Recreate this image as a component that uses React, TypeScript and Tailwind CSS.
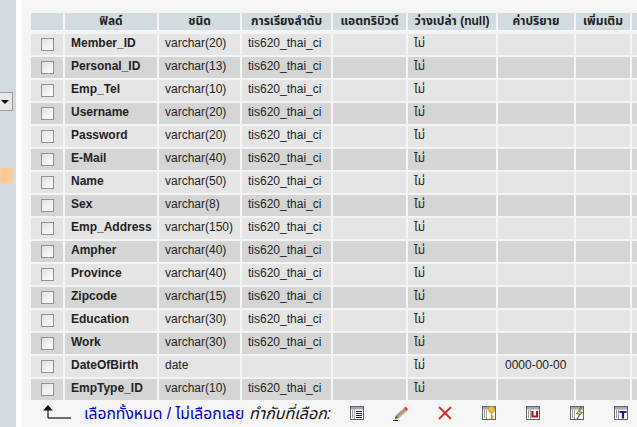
const rows: [string, string, boolean, string?][] = [
  ["Member_ID", "varchar(20)", true],
  ["Personal_ID", "varchar(13)", true],
  ["Emp_Tel", "varchar(10)", true],
  ["Username", "varchar(20)", true],
  ["Password", "varchar(20)", true],
  ["E-Mail", "varchar(40)", true],
  ["Name", "varchar(50)", true],
  ["Sex", "varchar(8)", true],
  ["Emp_Address", "varchar(150)", true],
  ["Ampher", "varchar(40)", true],
  ["Province", "varchar(40)", true],
  ["Zipcode", "varchar(15)", true],
  ["Education", "varchar(30)", true],
  ["Work", "varchar(30)", true],
  ["DateOfBirth", "date", false, "0000-00-00"],
  ["EmpType_ID", "varchar(10)", true],
];

const headers: [string, string][] = [
  ["", "w-[34px]"],
  ["ฟิลด์", "w-[94px]"],
  ["ชนิด", "w-[83px]"],
  ["การเรียงลำดับ", "w-[91px]"],
  ["แอตทริบิวต์", "w-[75px]"],
  ["ว่างเปล่า (null)", "w-[90px]"],
  ["ค่าปริยาย", "w-[78px]"],
  ["เพิ่มเติม", "w-[56px]"],
  ["", "w-[60px]"],
];

function Frame({ children }: { children: React.ReactNode }) {
  return (
    <svg width="14" height="14" viewBox="0 0 14 14" className="shrink-0">
      <rect x="0.5" y="0.5" width="13" height="13" fill="#fff" stroke="#5f6368" />
      <rect x="1" y="1" width="12" height="2.500" fill="#a3a9b0" />
      <path d="M2.500 4.500v8" stroke="#333" strokeDasharray="1 1" />
      <path d="M4.500 3.500v9.500" stroke="#9aa0a6" />
      {children}
    </svg>
  );
}

const Icons = () => (
  <div className="flex items-center gap-[30px]">
    <Frame>
      <path d="M6 5.500h6M6 7.500h6M6 9.500h6M6 11.500h6" stroke="#222" />
    </Frame>
    <svg width="16" height="15" viewBox="0 0 16 15" className="shrink-0 mx-[-1px]">
      <path d="M2 13l1-4 8-7 3 3-8 7z" fill="#d8a850" />
      <path d="M3 9.500l8.500-7 1.500 1.500-8 7z" fill="#8f98b8" />
      <path d="M11 2l1.500-1.500 2.500 2.500-1.500 2z" fill="#d8402c" />
      <path d="M2 13l1-3 2 2z" fill="#333" />
      <path d="M0 14.500h5" stroke="#111" />
    </svg>
    <svg width="14" height="14" viewBox="0 0 14 14" className="shrink-0">
      <path d="M1 1l12 12M13 1L1 13" stroke="#cf2f25" strokeWidth="1.800" />
    </svg>
    <Frame>
      <circle cx="9.500" cy="3.500" r="3.200" fill="#efc22a" stroke="#a5801a" strokeWidth="0.5" />
      <path d="M9.500 6v7M9.500 10.500h2M9.500 12.500h2" stroke="#c89f1c" strokeWidth="1.500" fill="none" />
    </Frame>
    <Frame>
      <path d="M6.500 5v5.500h4.500V5" stroke="#b01818" strokeWidth="2.200" fill="none" />
    </Frame>
    <Frame>
      <path d="M10.500 1.500L6.500 8h3L7 13l5.500-7h-3l2-4.500z" fill="#efd84a" stroke="#333" strokeWidth="0.6" />
    </Frame>
    <Frame>
      <path d="M5.500 6h7M9 6v6.500" stroke="#241a80" strokeWidth="2.200" fill="none" />
    </Frame>
  </div>
);

export default function App() {
  const sans = "font-['Liberation_Sans','Noto_Sans_Thai','Noto_Sans',Tahoma,sans-serif]";
  return (
    <div className={`flex h-[427px] w-[637px] overflow-hidden bg-white text-[12px] text-black ${sans}`}>
      <aside className="w-[16px] shrink-0 bg-[#d0dce0] flex flex-col">
        <div className="mt-[92px] flex h-[19px] w-[13px] items-center justify-end border border-l-0 border-[#9a9a9a] bg-[#e8e8e8] pr-[3px]">
          <span className="h-0 w-0 border-x-[4px] border-t-[4px] border-x-transparent border-t-black" />
        </div>
        <div className="mt-[57px] h-[15px] w-[13px] bg-[#ffcc99]" />
      </aside>
      <main className="ml-[6px] min-w-0 flex-1 bg-[#f5f5f5] pl-[9px] pt-[11px]">
        <table className="table-fixed w-[661px] border-separate border-spacing-x-0 border-spacing-y-[2px]">
          <thead>
            <tr>
              {headers.map(([t, w], i) => (
                <th
                  key={i}
                  className={`${w} h-[19px] border-r-2 border-b-2 border-[#f5f5f5] bg-[#d0dce0] bg-clip-padding p-0 text-center align-middle text-[12px] leading-[17px] font-bold text-[#222]`}
                >
                  {t}
                </th>
              ))}
            </tr>
          </thead>
          <tbody>
            {rows.map(([name, type, coll, def], i) => {
              const bg = i % 2 === 0 ? "bg-[#e5e5e5]" : "bg-[#d5d5d5]";
              const td = `${bg} bg-clip-padding h-[21px] border-r-2 border-[#f5f5f5] p-0 align-top leading-[18px]`;
              return (
                <tr key={name}>
                  <td className={`${td} pl-[10px] pt-[4px]`}>
                    <div className="h-[13px] w-[13px] border border-[#8f8f8f] bg-gradient-to-br from-[#e0e0e0] to-white" />
                  </td>
                  <td className={`${td} pl-[6px] font-bold text-[#222]`}>{name}</td>
                  <td className={`${td} pl-[6px] text-[#222]`}>{type}</td>
                  <td className={`${td} pl-[6px] text-[#222]`}>{coll ? "tis620_thai_ci" : ""}</td>
                  <td className={td} />
                  <td className={`${td} pl-[6px] text-[#222]`}>ไม่</td>
                  <td className={`${td} pl-[7px] text-[#222]`}>{def ?? ""}</td>
                  <td className={td} />
                  <td className={td} />
                </tr>
              );
            })}
          </tbody>
        </table>
        <div className="flex h-[24px] items-center whitespace-nowrap">
          <svg width="30" height="16" viewBox="0 0 30 16" className="ml-[11px] mb-[5px] shrink-0">
            <path d="M6 14V3M2.500 6l3.500-4 3.500 4z" stroke="#111" strokeWidth="1.200" fill="#111" />
            <path d="M6 14h23" stroke="#111" strokeWidth="1.200" />
          </svg>
          <span className="ml-[12px] w-[165px] text-[15.7px] leading-[20px] text-[#0000c0]">เลือกทั้งหมด / ไม่เลือกเลย</span>
          <span className="w-[101px] overflow-hidden text-[16px] leading-[20px] italic text-[#111]">ทำกับที่เลือก:</span>
          <div className="mb-[2px]"><Icons /></div>
        </div>
      </main>
    </div>
  );
}
